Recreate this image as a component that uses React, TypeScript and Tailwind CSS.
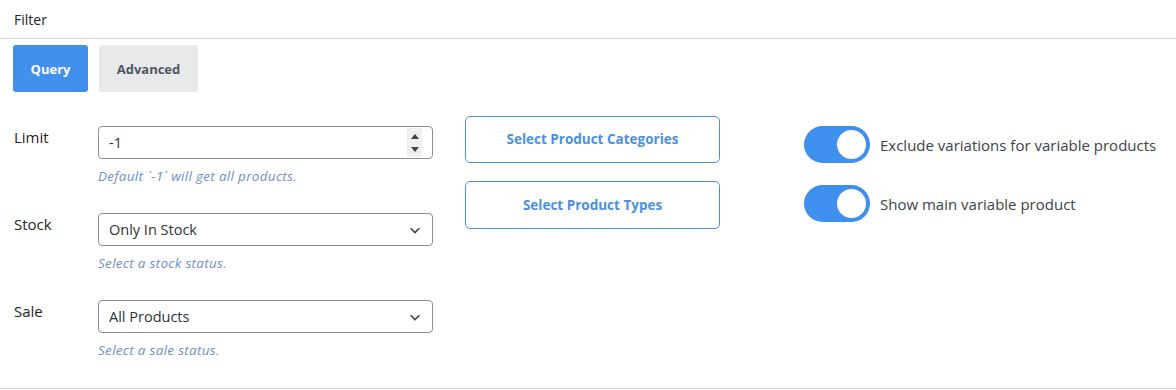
import React, { useState } from "react";

const font = { fontFamily: '"Open Sans", "Noto Sans", sans-serif' };

function Toggle({ on, label, onChange }: { on: boolean; label: string; onChange: () => void }) {
  return (
    <label className="flex items-center gap-[10px] cursor-pointer">
      <button
        type="button"
        onClick={onChange}
        className={`relative h-[37px] w-[66px] rounded-full ${on ? "bg-[#3f8fee]" : "bg-gray-300"}`}
      >
        <span
          className={`absolute top-[4px] h-[29px] w-[29px] rounded-full bg-white ${on ? "left-[33px]" : "left-[4px]"}`}
        />
      </button>
      <span className="pt-[2px] text-[15px] text-[#3c434a]">{label}</span>
    </label>
  );
}

function Chevron() {
  return (
    <svg width="14" height="14" viewBox="0 0 16 16" className="text-[#3c434a]">
      <path d="M3 6l5 5 5-5" fill="none" stroke="currentColor" strokeWidth="1.8" />
    </svg>
  );
}

function Field({ label, help, children }: { label: string; help: string; children: React.ReactNode }) {
  return (
    <div className="flex">
      <div className="w-[84px] text-[15px] text-[#1d2327]">{label}</div>
      <div className="w-[335px]">
        {children}
        <p className="mt-[8px] h-[18px] text-[13.5px] leading-[18px] tracking-[0.3px] italic text-[#6f8fc7]">{help}</p>
      </div>
    </div>
  );
}

function Select({ value }: { value: string }) {
  return (
    <div className="flex h-[33px] items-center justify-between rounded-[4px] border border-[#8c8f94] pl-[10px] pr-[10px] text-[14.5px] text-[#2c3338]">
      <span>{value}</span>
      <Chevron />
    </div>
  );
}

export default function App() {
  const [tab, setTab] = useState("query");
  const [exclude, setExclude] = useState(true);
  const [showMain, setShowMain] = useState(true);

  return (
    <div className="h-[390px] w-[1176px] bg-white" style={font}>
      <div className="border-b border-[#d0d3d6] px-[14px] pb-[8px] pt-[9px] text-[14px] text-[#1d2327]">Filter</div>
      <div className="border-b border-[#d0d3d6] pb-[29px]">
        <div className="flex gap-[11px] px-[13px] pt-[6px]">
          <button
            onClick={() => setTab("query")}
            className={`h-[47px] w-[75px] rounded-[3px] pt-[2px] text-[13px] font-bold ${tab === "query" ? "bg-[#4190ed] text-white" : "bg-[#e8e9eb] text-[#50575e]"}`}
          >
            Query
          </button>
          <button
            onClick={() => setTab("advanced")}
            className={`h-[47px] w-[99px] rounded-[3px] pt-[2px] text-[13px] font-bold ${tab === "advanced" ? "bg-[#4190ed] text-white" : "bg-[#e8e9eb] text-[#50575e]"}`}
          >
            Advanced
          </button>
        </div>

        <div className="flex pl-[14px] pt-[23px]">
          <div className="flex w-[419px] flex-col gap-[28px] pt-[11px]">
            <Field label="Limit" help="Default `-1` will get all products.">
              <div className="flex h-[33px] items-center justify-between rounded-[4px] border border-[#8c8f94] pl-[10px] pr-[10px] text-[14.5px] text-[#2c3338]">
                <span>-1</span>
                <div className="flex h-[29px] w-[15px] flex-col items-center justify-center gap-[8px] bg-[#f0f0f0]">
                  <svg width="8" height="5" viewBox="0 0 8 5"><path d="M4 0L8 5H0z" fill="#3c434a" /></svg>
                  <svg width="8" height="5" viewBox="0 0 8 5"><path d="M0 0h8L4 5z" fill="#3c434a" /></svg>
                </div>
              </div>
            </Field>
            <Field label="Stock" help="Select a stock status.">
              <Select value="Only In Stock" />
            </Field>
            <Field label="Sale" help="Select a sale status.">
              <Select value="All Products" />
            </Field>
          </div>

          <div className="ml-[32px] flex w-[255px] flex-col gap-[18px] pt-[1px]">
            <button className="h-[47px] rounded-[5px] border border-[#4a90e2] text-[13.5px] font-bold text-[#4a90e2]">
              Select Product Categories
            </button>
            <button className="h-[48px] rounded-[5px] border border-[#4a90e2] text-[13.5px] font-bold text-[#4a90e2]">
              Select Product Types
            </button>
          </div>

          <div className="ml-[84px] flex flex-col gap-[22px] pt-[11px]">
            <Toggle on={exclude} onChange={() => setExclude(!exclude)} label="Exclude variations for variable products" />
            <Toggle on={showMain} onChange={() => setShowMain(!showMain)} label="Show main variable product" />
          </div>
        </div>
      </div>
    </div>
  );
}
